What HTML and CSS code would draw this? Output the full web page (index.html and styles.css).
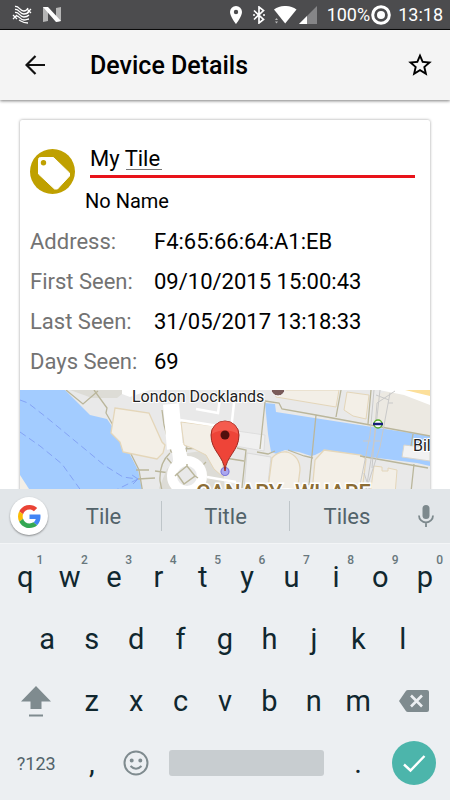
FILE: index.html
```html
<!DOCTYPE html>
<html lang="en">
<head>
<meta charset="utf-8">
<meta name="viewport" content="width=device-width, initial-scale=1">
<title>Device Details</title>
<link rel="stylesheet" href="styles.css">
</head>
<body>
<div class="status">
  <svg class="status-knot" width="20" height="20" viewBox="0 0 20 20" fill="none" stroke="#fff" stroke-width="1.300" aria-hidden="true">
    <path d="M3 1.500c4-1 5 5 9 4.500 2 0 3-1 4-3M3 4.500c4-1 5 5 9 4.500 2 0 3 0 5-2M3 7.500c4-1 5 5 9 4.500 2 0 4-1 5-2M4 11c3-1 4 4 8 4 2 0 4-1 5-1M7 15c2 1 4 3 9 3"/>
    <path d="M15 4l4 4M19 4l-4 4M1 10l4 4M5 10l-4 4" stroke-width="1.200"/>
  </svg>
  <svg width="18" height="15" viewBox="0 0 18 15" aria-hidden="true">
    <path d="M0 0h5v14L0 15zM13 1l5-1v14l-5 1z" fill="#b5b5b5"/>
    <path d="M0 0h5l13 14-5 1z" fill="#fff"/>
  </svg>
  <span class="spacer"></span>
  <svg width="12" height="18" viewBox="0 0 12 18" aria-hidden="true"><path d="M6 0a6 6 0 0 0-6 6c0 4.500 6 12 6 12s6-7.500 6-12a6 6 0 0 0-6-6zm0 8.200a2.200 2.200 0 1 1 0-4.400 2.200 2.200 0 0 1 0 4.400z" fill="#fff"/></svg>
  <svg class="status-bt" width="12" height="18" viewBox="0 0 12 18" fill="none" stroke="#fff" stroke-width="1.700" aria-hidden="true"><path d="M1 4.500l9.500 9L6 17V1l4.500 3.500-9.500 9"/><path d="M0 9h2M10 9h2"/></svg>
  <svg class="status-wifi" width="23" height="18" viewBox="0 0 23 18" aria-hidden="true"><path d="M0 3.500C6.500-1.200 16-1.200 22.500 3.500L11.200 17.500z" fill="#fff"/><path d="M1 14l1.500-2L4 14zM1 15.500h3l-1.500 2z" fill="#bbb"/></svg>
  <svg class="status-signal" width="18" height="18" viewBox="0 0 18 18" aria-hidden="true"><path d="M0 18L18 0v18z" fill="#858587"/><path d="M0 18l8-8v8z" fill="#fff"/></svg>
  <span>100%</span>
  <svg class="status-ring" width="20" height="20" viewBox="0 0 20 20" aria-hidden="true"><circle cx="10" cy="10" r="8.300" fill="none" stroke="#fff" stroke-width="3"/><circle cx="10" cy="10" r="4" fill="#fff"/></svg>
  <span>13:18</span>
</div>

<header class="toolbar">
  <button class="icon-button" type="button" aria-label="Back">
    <svg width="20" height="20" viewBox="0 0 20 20" fill="none" stroke="#111" stroke-width="2.200" aria-hidden="true"><path d="M20 10H2M10.500 1L1.500 10l9 9"/></svg>
  </button>
  <h1>Device Details</h1>
  <button class="icon-button" type="button" aria-label="Favourite">
    <svg width="26" height="26" viewBox="1 1 22 22" fill="#000" aria-hidden="true"><path d="M22 9.240l-7.190-.62L12 2 9.190 8.630 2 9.240l5.460 4.730L5.820 21 12 17.270 18.180 21l-1.630-7.030L22 9.240zM12 15.400l-3.760 2.270 1-4.280-3.320-2.880 4.380-.38L12 6.100l1.710 4.040 4.380.38-3.320 2.880 1 4.280L12 15.400z"/></svg>
  </button>
</header>

<main>
  <section class="card">
    <div class="device">
      <svg class="avatar" width="45" height="45" viewBox="0 0 45 45" aria-hidden="true">
        <circle cx="22.500" cy="22.500" r="22.500" fill="#bfa000"/>
        <path d="M8.500 10.500a2 2 0 0 1 2-2h13L39.500 24v3L27.500 40h-3L8.500 25z" fill="#fff" stroke="#fff" stroke-width="1" stroke-linejoin="round"/>
        <circle cx="13.500" cy="13.700" r="2.700" fill="#bfa000"/>
      </svg>
      <div class="names">
        <label class="hidden" for="name">Device name</label>
        <input id="name" type="text" value="My Tile" spellcheck="false">
        <p>No Name</p>
      </div>
    </div>
    <dl>
      <dt>Address:</dt><dd>F4:65:66:64:A1:EB</dd>
      <dt>First Seen:</dt><dd>09/10/2015 15:00:43</dd>
      <dt>Last Seen:</dt><dd>31/05/2017 13:18:33</dd>
      <dt>Days Seen:</dt><dd>69</dd>
    </dl>
    <svg class="map" viewBox="20 390 410 110" role="img" aria-label="Map of Canary Wharf">
      <rect x="20" y="390" width="410" height="110" fill="#e9e9e9"/>
      <path d="M70 390h57l-10 8H92z" fill="#dddcd6"/>
      <path d="M122 390h28l-20 7-8-3z" fill="#fff"/>
      <path d="M20 390h45l25 25 17 4 18 26 13 25 6 30H20z" fill="#a3ccff"/>
      <path d="M20 475l9 14v11h-9z" fill="#f3efe7"/>
      <g fill="none" stroke="#84a3f5" stroke-width="1" stroke-dasharray="7 4">
        <path d="M20 400l8 3 18 14 40 33 18 15 19 12 14 2"/><path d="M20 432l20 14 22 18 20 28"/><path d="M138 479l-28 14M138 479l-6-4M138 479l-5 5"/>
      </g>
      <g fill="none" stroke="#bab69b" stroke-width="1.300">
        <path d="M66 390l17 14 15-13M94 390l13 18-1 5 12 21 8 10 13 26 5 30"/><path d="M136 470h13M155 471l15 2M138 479l17-1"/>
      </g>
      <path d="M115 408l34 5 13 29 3 3-2 8-6 6-29-6-5-1-3-10-9-9z" fill="#f3efe7" stroke="#e4d6b9" stroke-width="1.300"/>
      <path d="M182 454l25-4 11 7 6 10v33h-62l-3-12 8-19z" fill="#dddcd6"/>
      <path d="M170 453q-11 10-10 28l4 19M162 410l2 15 7 27 7 1M183 449l18-1q18 10 23 28M167 458l5 6M188 440l-2 12M206 462l-7 7" fill="none" stroke="#bab69b" stroke-width="1.300"/>
      <path d="M171 404l4 45" stroke="#fff" stroke-width="16" fill="none"/>
      <path d="M171 443h13l5 20-15 5z" fill="#fff"/>
      <circle cx="187" cy="476" r="15" fill="#e9e9e9" stroke="#fff" stroke-width="10"/>
      <path d="M177 474l10-8 8 10-11 8zM177 474l-2 2M187 466v-2M195 476l3 2" fill="none" stroke="#bab69b" stroke-width="1.500"/>
      <path d="M181 422l42 5v50l-9-8-8-14-14-7-8-3z" fill="#f3efe7" stroke="#e4d6b9"/>
      <path d="M180 420l45 7M196 409l22 4 2-15M234 403l-3 27M207 477l29 5" fill="none" stroke="#fff" stroke-width="2.500"/>
      <path d="M276 390h63l-3 17-60-10z" fill="#f3efe7" stroke="#e4d6b9"/>
      <path d="M347 392l22 3-3 24-13-3-9-6z" fill="#f3efe7" stroke="#e4d6b9"/>
      <path d="M374 400q5-8 15-9l41 5v40l-56-9z" fill="#ece9e2"/>
      <path d="M379 390h51v15l-26-10z" fill="#fff"/>
      <path d="M405 390h25v6z" fill="#fcdf9a"/>
      <path d="M265 403l10 1 1 8 154 24v30l-13-3-94-12-8 4-4 1-12-4-14-2-5 2-3 2-6-2-3-18z" fill="#a3ccff"/>
      <path d="M237 431l28 4-1 16-29-5z" fill="#f0f0f0" stroke="#dedede"/>
      <path d="M247 453l24 4-4 36-23-4z" fill="#eee" stroke="#d9d9d9"/>
      <path d="M268 488l4-30q6-7 15-6 13 4 13 18l-3 23z" fill="#f3efe7" stroke="#e4d6b9" stroke-width="1.300"/>
      <path d="M324 450l37 5 5 4-5 41-49-7 3-33z" fill="#f3efe7" stroke="#e4d6b9" stroke-width="1.300"/>
      <path d="M374 466l8 1v4h6v-3l9 2-2 25h-25z" fill="#f3efe7" stroke="#e4d6b9"/>
      <path d="M404 445l26 3v13l-28-4z" fill="#f2f2f2" stroke="#d9d6cd"/>
      <g fill="none" stroke="#bab69b" stroke-width="1.300">
        <path d="M265 401l14 2 3 6 34 6 114 21M316 415l-7 70M341 390l-5 27M371 390l-3 34M257 452l11 2 7-3M288 450l16 6 9 2M360 456l68 12M413 434l-2 12M414 464l-3 28M237 448l9 2-4 38M225 458l19 3M265 402l-5 47"/>
      </g>
      <g fill="none" stroke="#c9c9c9" stroke-width="1">
        <path d="M374 390l-4 45-11 55M380 390l-5 45-9 55M395 391l-18 12-5 65M390 393l-10 54-13 40M389 400l-13-5M388 403h5M363 441h8M374 441h6M364 473l6 18"/>
      </g>
      <path d="M270 489l18-1 90 12H268z" fill="#fff"/>
      <circle cx="278" cy="389" r="7" fill="#795b59" stroke="#fff" stroke-width="1"/><path d="M274 389h8" stroke="#fff" stroke-width="2"/>
      <circle cx="378" cy="424" r="4" fill="#fff" stroke="#53ad28" stroke-width="1.500"/><path d="M373 424h10" stroke="#151f79" stroke-width="2.500"/>
      <text class="place" x="132" y="402">London Docklands</text>
      <text class="place" x="413" y="451">Bil</text>
      <text class="district" x="196" y="500">CANARY</text><text class="district" x="295" y="500">WHARF</text>
      <circle cx="225" cy="471.500" r="4" fill="#aaa7ef" stroke="#7c76d8" stroke-width="1.200"/>
      <path d="M225 471c-1-15-14-20-14-36a14 14 0 0 1 28 0c0 16-13 21-14 36z" fill="#ee4438" stroke="#9e2a21"/>
      <path d="M212 434a13 13 0 0 1 26 0c-8-5-18-5-26 0z" fill="#fa6b5e" opacity=".6"/>
      <circle cx="225" cy="435" r="4.500" fill="#53100d"/>
    </svg>
  </section>
</main>

<section class="keyboard" aria-label="Keyboard">
  <div class="suggestions">
    <button class="google" type="button" aria-label="Google search">
      <svg width="23" height="23" viewBox="0 0 48 48" aria-hidden="true"><path fill="#ea4335" d="M24 9.500c3.540 0 6.710 1.220 9.210 3.600l6.850-6.850C35.900 2.380 30.470 0 24 0 14.620 0 6.510 5.380 2.560 13.220l7.980 6.190C12.430 13.720 17.740 9.500 24 9.500z"/><path fill="#4285f4" d="M46.980 24.550c0-1.570-.15-3.090-.38-4.550H24v9.020h12.940c-.58 2.960-2.260 5.480-4.780 7.180l7.730 6c4.510-4.180 7.090-10.360 7.090-17.650z"/><path fill="#fbbc05" d="M10.530 28.590c-.48-1.450-.76-2.990-.76-4.590s.27-3.140.76-4.590l-7.980-6.190C.92 16.460 0 20.120 0 24s.92 7.540 2.560 10.780l7.970-6.190z"/><path fill="#34a853" d="M24 48c6.480 0 11.930-2.130 15.890-5.810l-7.730-6c-2.150 1.450-4.920 2.300-8.160 2.300-6.260 0-11.570-4.220-13.470-9.910l-7.980 6.190C6.510 42.620 14.620 48 24 48z"/></svg>
    </button>
    <div class="words">
      <button type="button">Tile</button>
      <button type="button">Title</button>
      <button type="button">Tiles</button>
    </div>
    <button class="mic" type="button" aria-label="Voice input">
      <svg width="16" height="22" viewBox="0 0 16 22" aria-hidden="true"><rect x="4.500" y="0" width="7" height="14" rx="3.500" fill="#7d898d"/><path d="M1 10.500a7 7 0 0 0 14 0M8 17.500V22" fill="none" stroke="#7d898d" stroke-width="1.800"/></svg>
    </button>
  </div>
  <div class="keys">
    <div class="row">
      <button type="button">q<sup>1</sup></button><button type="button">w<sup>2</sup></button><button type="button">e<sup>3</sup></button><button type="button">r<sup>4</sup></button><button type="button">t<sup>5</sup></button><button type="button">y<sup>6</sup></button><button type="button">u<sup>7</sup></button><button type="button">i<sup>8</sup></button><button type="button">o<sup>9</sup></button><button type="button">p<sup>0</sup></button>
    </div>
    <div class="row row-home">
      <button type="button">a</button><button type="button">s</button><button type="button">d</button><button type="button">f</button><button type="button">g</button><button type="button">h</button><button type="button">j</button><button type="button">k</button><button type="button">l</button>
    </div>
    <div class="row row-shift">
      <button type="button" aria-label="Shift"><svg width="30" height="31" viewBox="0 0 30 31" fill="#7f8b8f" aria-hidden="true"><path d="M15 0l15 15.500h-9.500V23h-11v-7.500H0zM8 28.500h14v2H8z"/></svg></button>
      <button type="button">z</button><button type="button">x</button><button type="button">c</button><button type="button">v</button><button type="button">b</button><button type="button">n</button><button type="button">m</button>
      <button type="button" aria-label="Delete"><svg width="30" height="22" viewBox="0 0 30 22" aria-hidden="true"><path d="M9 0h19a2 2 0 0 1 2 2v18a2 2 0 0 1-2 2H9q-1.500 0-2.300-1.300L0 11l6.700-9.700Q7.500 0 9 0z" fill="#7f8b8f"/><path d="M12 5.500l11 11M23 5.500l-11 11" stroke="#eceff2" stroke-width="2.600"/></svg></button>
    </div>
    <div class="row row-space">
      <button class="symbols" type="button">?123</button>
      <button type="button">,</button>
      <button type="button" aria-label="Emoji"><svg width="26" height="26" viewBox="0 0 26 26" fill="none" stroke="#7f8b8f" stroke-width="2" aria-hidden="true"><circle cx="13" cy="13" r="11.500"/><path d="M7.500 16q5.500 5.500 11 0"/><circle cx="8.700" cy="10.500" r="1" /><circle cx="17.300" cy="10.500" r="1"/></svg></button>
      <button class="space" type="button" aria-label="Space"></button>
      <button type="button">.</button>
      <button class="done" type="button" aria-label="Done"><svg width="44" height="44" viewBox="0 0 44 44" aria-hidden="true"><circle cx="22" cy="22" r="22" fill="#4cb5ab"/><path d="M12 23.500l6.500 6L32.500 15" fill="none" stroke="#fff" stroke-width="2.400"/></svg></button>
    </div>
  </div>
</section>
</body>
</html>
```
FILE: styles.css
```css
* {
  box-sizing: border-box;
}

body {
  display: flex;
  flex-direction: column;
  height: 100vh;
  margin: 0;
  overflow: hidden;
  background: #fff;
  color: #000;
  font-family: Roboto, "Liberation Sans", sans-serif;
}

button {
  display: flex;
  align-items: center;
  justify-content: center;
  min-width: 0;
  padding: 0;
  border: 0;
  background: none;
  color: inherit;
  font: inherit;
}

.status {
  display: flex;
  flex: none;
  align-items: center;
  height: 30px;
  padding: 0 7px 0 12px;
  border-bottom: 1px solid #0a0a0a;
  background: #4c4c4e;
  color: #fff;
  font-size: 18px;
}

.status-knot {
  margin-right: 11px;
}

.spacer {
  flex: 1;
}

.status-bt {
  margin-left: 11px;
}

.status-wifi {
  margin-left: 9px;
}

.status-signal {
  margin: 0 10px 0 2px;
}

.status-ring {
  margin: 0 7px 0 1px;
}

.toolbar {
  display: flex;
  flex: none;
  align-items: center;
  height: 70px;
  padding: 0 17px 0 25px;
  background: #f4f4f4;
  box-shadow: 0 1px 3px rgba(0, 0, 0, 0.5);
}

.icon-button {
  flex: none;
}

.toolbar h1 {
  flex: 1;
  margin: 0 0 0 45px;
  font-size: 25px;
  font-weight: 500;
}

main {
  flex: 1;
  min-height: 0;
  padding: 20px 20px 0;
  overflow: hidden;
}

.card {
  padding-top: 24px;
  border-radius: 2px;
  background: #fff;
  box-shadow: 0 0 3px rgba(0, 0, 0, 0.4);
}

.device {
  display: grid;
  grid-template-columns: 45px 1fr;
  column-gap: 10px;
  padding: 0 15px 0 10px;
}

.avatar {
  margin-top: 5px;
}

.names {
  display: flex;
  flex-direction: column;
  gap: 10px;
}

.names input {
  height: 34px;
  margin-left: 5px;
  padding: 0 0 3px;
  border: 0;
  border-bottom: 3px solid #e8131a;
  outline: 0;
  background: linear-gradient(#777, #777) 36px 25px / 36px 1px no-repeat;
  font: 22px/28px Roboto, "Liberation Sans", sans-serif;
}

.names p {
  margin: 0;
  font-size: 20px;
  line-height: 26px;
}

.hidden {
  position: absolute;
  width: 1px;
  height: 1px;
  overflow: hidden;
  clip-path: inset(50%);
}

dl {
  display: grid;
  grid-template-columns: 124px 1fr;
  margin: 8px 10px;
  font-size: 22px;
  line-height: 40px;
}

dt {
  color: #737373;
}

dd {
  margin: 0;
}

.map {
  display: block;
  width: 100%;
}

.place {
  fill: #222;
  stroke: #fff;
  stroke-width: 2px;
  paint-order: stroke;
  font-size: 16px;
}

.district {
  fill: #8c6d35;
  stroke: #fff;
  stroke-width: 3px;
  paint-order: stroke;
  font-size: 22px;
  font-weight: 500;
}

.keyboard {
  flex: none;
  background: #eceff2;
  color: #10272f;
}

.suggestions {
  display: flex;
  align-items: center;
  height: 54px;
  padding: 0 16px 0 10px;
  background: #e2e6e9;
  color: #52636a;
  font-size: 22px;
}

.google {
  flex: none;
  width: 38px;
  height: 38px;
  border-radius: 50%;
  background: #fff;
  box-shadow: 0 1px 2px rgba(0, 0, 0, 0.4);
}

.words {
  display: grid;
  flex: 1;
  grid-template-columns: 9fr 10fr 9fr;
  margin: 0 14px 0 -2px;
}

.words button {
  height: 30px;
}

.words button + button {
  border-left: 1px solid #bec5c9;
}

.keys {
  padding: 2px 3px 6px;
  border-top: 1px solid #f3f5f7;
}

.row {
  display: grid;
  grid-template-columns: repeat(10, 1fr);
  font-size: 29px;
}

.row button {
  position: relative;
  height: 62px;
}

.row sup {
  position: absolute;
  top: 7px;
  right: 4px;
  color: #68777d;
  font-size: 12px;
  font-weight: 500;
  line-height: 14px;
}

.row-home {
  grid-template-columns: repeat(9, 1fr);
  padding: 0 22px;
}

.row-shift {
  grid-template-columns: 3fr repeat(7, 2fr) 3fr;
}

.row-space {
  grid-template-columns: 3fr 2fr 2fr 8fr 2fr 3fr;
}

.row .symbols {
  color: #52636a;
  font-size: 18px;
}

.row .space {
  align-self: center;
  height: 26px;
  margin: 0 12px 0 11px;
  border-radius: 3px;
  background: #c8cdd0;
}
```
